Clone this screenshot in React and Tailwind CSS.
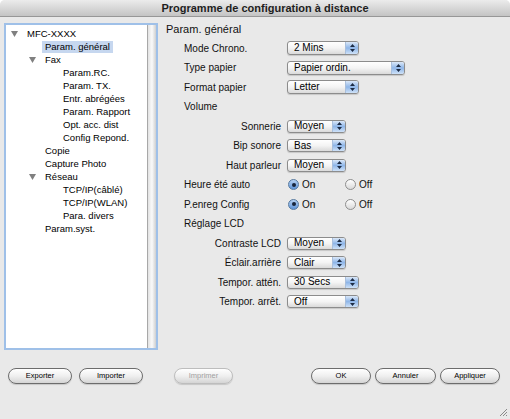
import React from 'react';

const treeItems = [
  { label: 'MFC-XXXX', level: 0, open: true },
  { label: 'Param. général', level: 1, selected: true },
  { label: 'Fax', level: 1, open: true },
  { label: 'Param.RC.', level: 2 },
  { label: 'Param. TX.', level: 2 },
  { label: 'Entr. abrégées', level: 2 },
  { label: 'Param. Rapport', level: 2 },
  { label: 'Opt. acc. dist', level: 2 },
  { label: 'Config Repond.', level: 2 },
  { label: 'Copie', level: 1 },
  { label: 'Capture Photo', level: 1 },
  { label: 'Réseau', level: 1, open: true },
  { label: 'TCP/IP(câblé)', level: 2 },
  { label: 'TCP/IP(WLAN)', level: 2 },
  { label: 'Para. divers', level: 2 },
  { label: 'Param.syst.', level: 1 },
];

const indent = ['w-0', 'w-[18px]', 'w-[36px]'];

const Triangle = () => (
  <svg width="7" height="6" viewBox="0 0 7 6">
    <path d="M0 0 H7 L3.5 6 Z" fill="#808080" />
  </svg>
);

const Select = ({ value, w, small }) => (
  <div
    className={`flex ${w} ${small ? 'h-[13px]' : 'h-[14px]'} rounded-[3px] border border-[#8c8c8c] bg-linear-to-b from-white via-[#f4f4f4] to-[#dadada] shadow-[0_1px_1px_rgba(0,0,0,0.15)] overflow-hidden`}
  >
    <div className="flex-1 pl-[6px] flex items-center text-[10px] leading-none text-black">{value}</div>
    <div className="w-[13px] border-l border-[#a9bfdc] bg-linear-to-b from-[#dbe8f8] via-[#8fb6e8] to-[#cfe2f8] flex items-center justify-center">
      <svg width="5" height="8" viewBox="0 0 5 8">
        <path d="M2.5 0 L5 3 H0 Z M0 5 H5 L2.5 8 Z" fill="#1d2c45" />
      </svg>
    </div>
  </div>
);

const Radio = ({ on, label }) => (
  <div className="flex items-center gap-[3px]">
    {on ? (
      <div className="w-[11px] h-[11px] rounded-full border border-[#56799f] bg-linear-to-b from-[#b6d1f2] to-[#5e94d8] flex items-center justify-center">
        <div className="w-[4px] h-[4px] rounded-full bg-[#17243a]" />
      </div>
    ) : (
      <div className="w-[11px] h-[11px] rounded-full border border-[#8e8e8e] bg-linear-to-b from-white to-[#d9d9d9]" />
    )}
    <span className="text-[10px]">{label}</span>
  </div>
);

const Button = ({ label, w, disabled }) => (
  <div
    className={`${w} h-[16px] rounded-full border flex items-center justify-center text-[7.5px] shadow-[0_1px_1px_rgba(0,0,0,0.15)] bg-linear-to-b from-white via-[#efefef] to-[#d5d5d5] ${disabled ? 'border-[#bdbdbd] text-[#a0a0a0]' : 'border-[#6c6c6c] text-black'}`}
  >
    {label}
  </div>
);

const Row = ({ label, right, children }) => (
  <div className="flex items-center h-[19.5px]">
    <div className={right ? 'w-[103px] pr-[6px] text-right' : 'w-[103px]'}>{label}</div>
    {children}
  </div>
);

const App = () => {
  return (
    <div className="w-[510px] h-[419px] bg-white font-['Liberation_Sans',Arial,sans-serif] text-[#111]">
      <div className="relative w-[510px] h-[419px] bg-[#e9e9e9] rounded-t-[5px] overflow-hidden">
        {/* Title bar */}
        <div className="h-[17px] pl-[20px] bg-linear-to-b from-[#ececec] to-[#c4c4c4] border-b border-[#979797] text-center text-[11px] font-bold leading-[16px] text-[#1e1e1e]">
          Programme de configuration à distance
        </div>

        <div className="flex pt-[5px] pl-[4px]">
          {/* Tree */}
          <div className="mt-[1px] w-[154px] h-[327px] border-2 border-[#9fc0e8] bg-white flex">
            <div className="flex-1 pt-[2px] text-[9.5px] text-black">
              {treeItems.map((item) => (
                <div key={item.label} className="flex items-center h-[13px]">
                  <div className={indent[item.level]} />
                  <div className="w-[21px] pl-[5px] flex items-center">{item.open && <Triangle />}</div>
                  <span
                    className={item.selected ? 'bg-[#c6d7ef] -ml-[3px] px-[3px] leading-[12px]' : 'leading-[12px]'}
                  >
                    {item.label}
                  </span>
                </div>
              ))}
            </div>
            <div className="w-[9px] border-l border-[#a8a8a8] bg-linear-to-r from-[#e2e2e2] via-[#fafafa] to-[#cfcfcf]" />
          </div>

          {/* Settings */}
          <div className="ml-[8px] flex flex-col text-[10px]">
            <div className="h-[14px] text-[11px] leading-[14px]">Param. général</div>
            <div className="mt-[2.25px] pl-[18px]">
              <Row label="Mode Chrono.">
                <Select value="2 Mins" w="w-[72px]" />
              </Row>
              <Row label="Type papier">
                <Select value="Papier ordin." w="w-[118px]" />
              </Row>
              <Row label="Format papier">
                <Select value="Letter" w="w-[72px]" />
              </Row>
              <Row label="Volume" />
              <Row label="Sonnerie" right>
                <Select value="Moyen" w="w-[59px]" small />
              </Row>
              <Row label="Bip sonore" right>
                <Select value="Bas" w="w-[59px]" small />
              </Row>
              <Row label="Haut parleur" right>
                <Select value="Moyen" w="w-[59px]" small />
              </Row>
              <Row label="Heure été auto">
                <div className="flex pl-[1px]">
                  <div className="w-[57px]">
                    <Radio on label="On" />
                  </div>
                  <Radio label="Off" />
                </div>
              </Row>
              <Row label="P.enreg Config">
                <div className="flex pl-[1px]">
                  <div className="w-[57px]">
                    <Radio on label="On" />
                  </div>
                  <Radio label="Off" />
                </div>
              </Row>
              <Row label="Réglage LCD" />
              <Row label="Contraste LCD" right>
                <Select value="Moyen" w="w-[59px]" small />
              </Row>
              <Row label="Éclair.arrière" right>
                <Select value="Clair" w="w-[59px]" small />
              </Row>
              <Row label="Tempor. attén." right>
                <Select value="30 Secs" w="w-[72px]" small />
              </Row>
              <Row label="Tempor. arrêt." right>
                <Select value="Off" w="w-[72px]" small />
              </Row>
            </div>
          </div>
        </div>

        {/* Buttons */}
        <div className="mt-[18px] flex items-center pl-[8px] pr-[10px]">
          <div className="flex gap-[7px]">
            <Button label="Exporter" w="w-[64px]" />
            <Button label="Importer" w="w-[64px]" />
          </div>
          <div className="ml-[31px]">
            <Button label="Imprimer" w="w-[59px]" disabled />
          </div>
          <div className="ml-auto flex gap-[4px]">
            <Button label="OK" w="w-[60px]" />
            <Button label="Annuler" w="w-[61px]" />
            <Button label="Appliquer" w="w-[60px]" />
          </div>
        </div>

        {/* Resize grip */}
        <div className="absolute right-[2px] bottom-[2px]">
          <svg width="11" height="11" viewBox="0 0 11 11">
            <path d="M10 3 L3 10 M10 6 L6 10 M10 9 L9 10" stroke="#8a8a8a" strokeWidth="1" />
          </svg>
        </div>
      </div>
    </div>
  );
};

export default App;
